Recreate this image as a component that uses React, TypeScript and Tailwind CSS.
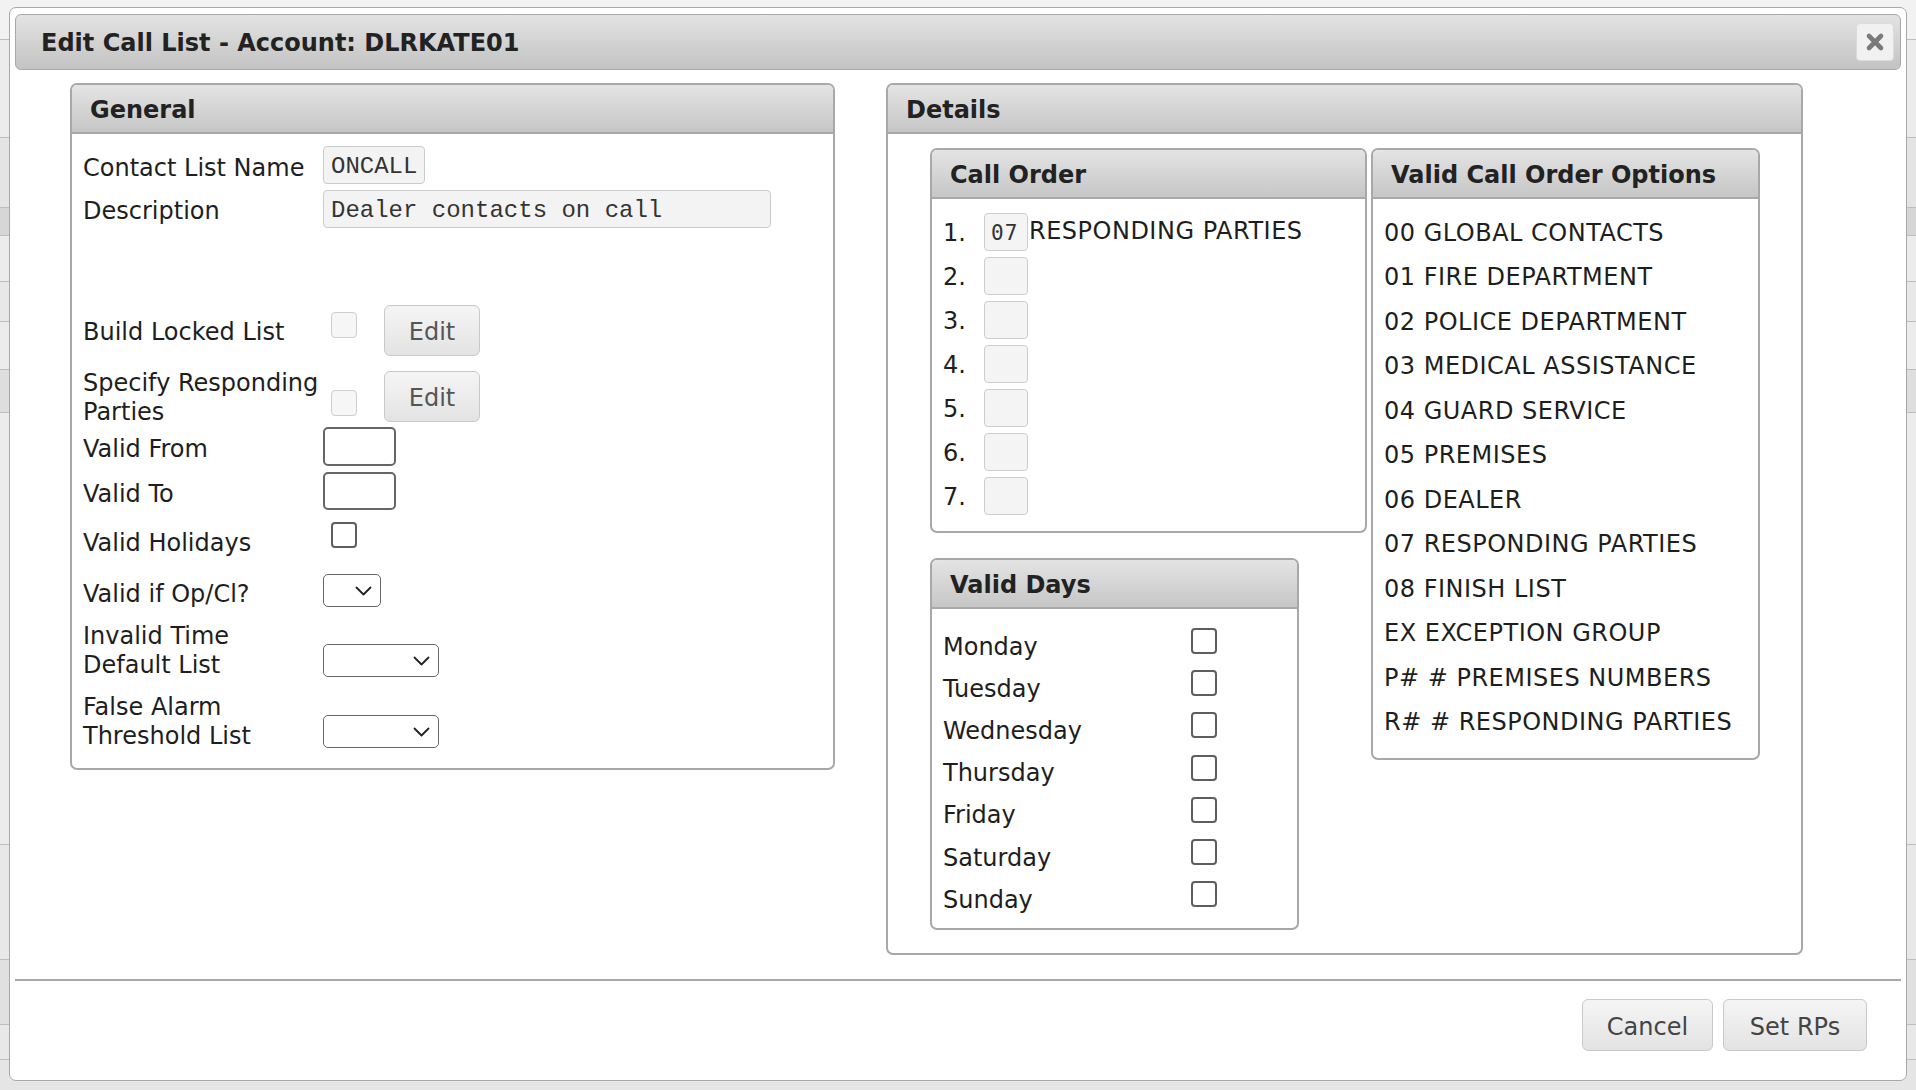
import React from "react";

const SANS = "font-['DejaVu_Sans','Verdana',sans-serif]";
const MONO = "font-['Liberation_Mono','Courier_New',monospace]";

function PanelHeader({ title }: { title: string }) {
  return (
    <div className="h-[49px] shrink-0 bg-linear-to-b from-[#e4e4e4] to-[#c6c6c6] border-b-2 border-[#a8a8a8] flex items-center pl-[18px] pt-[3px] text-[24px] font-bold text-[#222]">
      {title}
    </div>
  );
}

function Checkbox({ disabled = false, className = "" }: { disabled?: boolean; className?: string }) {
  return (
    <div
      className={
        "w-[26px] h-[26px] rounded-[4px] shrink-0 " +
        (disabled ? "border-[1.5px] border-[#cfcfcf] bg-[#f6f6f6] " : "border-2 border-[#5e5e5e] bg-white ") +
        className
      }
    />
  );
}

function Chevron() {
  return (
    <svg width="17" height="10" viewBox="0 0 17 10" fill="none">
      <path d="M1.5 1.5 L8.5 8.5 L15.5 1.5" stroke="#222" strokeWidth="1.8" strokeLinecap="round" strokeLinejoin="round" />
    </svg>
  );
}

function Select({ w }: { w: string }) {
  return (
    <div className={"h-[33px] bg-white border-[1.5px] border-[#666] rounded-[5px] flex items-center justify-end pr-[8px] pt-[1px] " + w}>
      <Chevron />
    </div>
  );
}

function EditButton() {
  return (
    <div className="w-[96px] h-[51px] rounded-[6px] border-[1.5px] border-[#c9c9c9] bg-linear-to-b from-[#f5f5f5] to-[#e3e3e3] flex items-center justify-center pt-[3px] text-[24px] text-[#555]">
      Edit
    </div>
  );
}

function FooterButton({ label, w }: { label: string; w: string }) {
  return (
    <div className={"h-[52px] rounded-[6px] border-[1.5px] border-[#c9c9c9] bg-linear-to-b from-[#f5f5f5] to-[#e3e3e3] flex items-center justify-center pt-[4px] text-[24px] text-[#444] " + w}>
      {label}
    </div>
  );
}

const options = [
  "00 GLOBAL CONTACTS",
  "01 FIRE DEPARTMENT",
  "02 POLICE DEPARTMENT",
  "03 MEDICAL ASSISTANCE",
  "04 GUARD SERVICE",
  "05 PREMISES",
  "06 DEALER",
  "07 RESPONDING PARTIES",
  "08 FINISH LIST",
  "EX EXCEPTION GROUP",
  "P# # PREMISES NUMBERS",
  "R# # RESPONDING PARTIES",
];

const days = ["Monday", "Tuesday", "Wednesday", "Thursday", "Friday", "Saturday", "Sunday"];

function Background() {
  const rows = [
    { h: "h-[40px]", bg: "bg-[#f2f2f2]" },
    { h: "h-[98px]", bg: "bg-[#ececec]" },
    { h: "h-[70px]", bg: "bg-[#e4e4e4]" },
    { h: "h-[28px]", bg: "bg-[#d6d6d6]" },
    { h: "h-[46px]", bg: "bg-[#ececec]" },
    { h: "h-[40px]", bg: "bg-[#e8e8e8]" },
    { h: "h-[48px]", bg: "bg-[#ececec]" },
    { h: "h-[43px]", bg: "bg-[#dedede]" },
    { h: "h-[432px]", bg: "bg-[#ececec]" },
    { h: "h-[115px]", bg: "bg-[#e8e8e8]" },
    { h: "h-[65px]", bg: "bg-[#e0e0e0]" },
    { h: "h-[35px]", bg: "bg-[#e8e8e8]" },
  ];
  return (
    <div className="flex flex-col w-full">
      {rows.map((r, i) => (
        <div key={i} className={"w-full border-b border-[#bdbdbd] " + r.h + " " + r.bg} />
      ))}
    </div>
  );
}

export default function App() {
  return (
    <div className={"relative w-[1916px] h-[1090px] overflow-hidden bg-[#e5e5e5] text-[#1e1e1e] " + SANS}>
      <Background />

      {/* Dialog */}
      <div className="absolute left-[9px] top-[7px] w-[1898px] h-[1074px] bg-white border border-[#a8a8a8] rounded-[7px] flex flex-col">
        {/* Title bar */}
        <div className="mx-[5px] mt-[6px] h-[56px] shrink-0 rounded-[6px] border border-[#a8a8a8] bg-linear-to-b from-[#e3e3e3] to-[#c3c3c3] flex items-center justify-between pl-[25px] pr-[6px]">
          <div className="text-[24px] font-bold text-[#222] pt-[1px]">Edit Call List - Account: DLRKATE01</div>
          <div className="w-[38px] h-[38px] rounded-[4px] border border-[#dcdcdc] bg-[#f1f1f1] flex items-center justify-center">
            <svg width="20" height="20" viewBox="0 0 20 20">
              <path d="M4 4 L16 16 M16 4 L4 16" stroke="#7a7a7a" strokeWidth="4.6" strokeLinecap="round" />
            </svg>
          </div>
        </div>

        {/* Content */}
        <div className="flex items-start pl-[60px] pt-[13px] gap-[51px] h-[885px] shrink-0">
          {/* General */}
          <div className="w-[765px] h-[687px] border-2 border-[#a8a8a8] rounded-[7px] overflow-hidden flex flex-col">
            <PanelHeader title="General" />
            <div className="pl-[11px] flex flex-col text-[24px]">
              <div className="mt-[12px] h-[38px] flex items-center">
                <div className="w-[240px] pt-[5px]">Contact List Name</div>
                <div className={"h-[38px] w-[102px] bg-[#f3f3f3] border-[1.5px] border-[#cccccc] rounded-[4px] flex items-center pl-[7px] pt-[3px] text-[24px] text-[#333] " + MONO}>ONCALL</div>
              </div>
              <div className="mt-[6px] h-[38px] flex items-center">
                <div className="w-[240px] pt-[3px]">Description</div>
                <div className={"h-[38px] w-[448px] bg-[#f3f3f3] border-[1.5px] border-[#cccccc] rounded-[4px] flex items-center pl-[7px] pt-[3px] text-[24px] text-[#333] " + MONO}>Dealer contacts on call</div>
              </div>
              <div className="mt-[77px] h-[51px] flex items-center">
                <div className="w-[240px] pt-[2px]">Build Locked List</div>
                <Checkbox disabled className="ml-[8px] mb-[12px]" />
                <div className="ml-[27px]"><EditButton /></div>
              </div>
              <div className="mt-[8px] h-[58px] flex items-start">
                <div className="w-[240px] leading-[29px] pt-[5px]">Specify Responding Parties</div>
                <Checkbox disabled className="ml-[8px] mt-[26px]" />
                <div className="ml-[27px] mt-[7px]"><EditButton /></div>
              </div>
              <div className="mt-[5px] h-[39px] flex items-center">
                <div className="w-[240px] pt-[5px]">Valid From</div>
                <div className="w-[73px] h-[39px] bg-white border-2 border-[#666] rounded-[5px]" />
              </div>
              <div className="mt-[6px] h-[38px] flex items-center">
                <div className="w-[240px] pt-[5px]">Valid To</div>
                <div className="w-[73px] h-[38px] bg-white border-2 border-[#666] rounded-[5px]" />
              </div>
              <div className="mt-[12px] h-[32px] flex items-start">
                <div className="w-[240px] leading-[29px] pt-[7px]">Valid Holidays</div>
                <Checkbox className="ml-[8px]" />
              </div>
              <div className="mt-[20px] h-[33px] flex items-center">
                <div className="w-[240px] pt-[7px]">Valid if Op/Cl?</div>
                <Select w="w-[58px]" />
              </div>
              <div className="mt-[10px] h-[60px] flex items-start">
                <div className="w-[240px] leading-[29px] pt-[5px]">Invalid Time Default List</div>
                <div className="self-end"><Select w="w-[116px]" /></div>
              </div>
              <div className="mt-[11px] h-[60px] flex items-start">
                <div className="w-[240px] leading-[29px] pt-[5px]">False Alarm Threshold List</div>
                <div className="self-end"><Select w="w-[116px]" /></div>
              </div>
            </div>
          </div>

          {/* Details */}
          <div className="w-[917px] h-[872px] border-2 border-[#a8a8a8] rounded-[7px] overflow-hidden flex flex-col">
            <PanelHeader title="Details" />
            <div className="pl-[42px] pt-[14px] flex items-start gap-[4px] text-[24px]">
              <div className="flex flex-col gap-[25px]">
                {/* Call Order */}
                <div className="w-[437px] h-[385px] border-2 border-[#a8a8a8] rounded-[7px] overflow-hidden flex flex-col">
                  <PanelHeader title="Call Order" />
                  <div className="pl-[11px] pt-[14px] flex flex-col gap-[6px]">
                    {[1, 2, 3, 4, 5, 6, 7].map((n) => (
                      <div key={n} className="h-[38px] flex items-center">
                        <div className="w-[41px] pt-[1px]">{n}.</div>
                        <div className="w-[44px] h-[38px] bg-[#f4f4f4] border-[1.5px] border-[#cdcdcd] rounded-[4px] flex items-center pl-[6px] pt-[3px] text-[21px] text-[#333] tracking-[1px] font-['DejaVu_Sans_Mono',monospace]">
                          {n === 1 ? "07" : ""}
                        </div>
                        {n === 1 && <div className="ml-[1px] -mt-[2px] tracking-[0.5px]">RESPONDING PARTIES</div>}
                      </div>
                    ))}
                  </div>
                </div>
                {/* Valid Days */}
                <div className="w-[369px] h-[372px] border-2 border-[#a8a8a8] rounded-[7px] overflow-hidden flex flex-col">
                  <PanelHeader title="Valid Days" />
                  <div className="pl-[11px] pt-[14px] flex flex-col">
                    {days.map((d) => (
                      <div key={d} className="h-[42.2px] flex items-center">
                        <div className="w-[248px] pt-[5px]">{d}</div>
                        <Checkbox className="mb-[6px]" />
                      </div>
                    ))}
                  </div>
                </div>
              </div>

              {/* Valid Call Order Options */}
              <div className="w-[389px] h-[612px] border-2 border-[#a8a8a8] rounded-[7px] overflow-hidden flex flex-col">
                <PanelHeader title="Valid Call Order Options" />
                <div className="pl-[11px] pt-[10px] flex flex-col">
                  {options.map((o) => (
                    <div key={o} className="h-[44.5px] flex items-center whitespace-pre tracking-[0.5px]">
                      <div className="pt-[3px]">{o}</div>
                    </div>
                  ))}
                </div>
              </div>
            </div>
          </div>
        </div>

        {/* Separator */}
        <div className="mt-[24px] mx-[5px] h-[2px] shrink-0 bg-[#a8a8a8]" />

        {/* Footer */}
        <div className="flex justify-end gap-[10px] pt-[18px] pr-[39px]">
          <FooterButton label="Cancel" w="w-[131px]" />
          <FooterButton label="Set RPs" w="w-[144px]" />
        </div>
      </div>
    </div>
  );
}
